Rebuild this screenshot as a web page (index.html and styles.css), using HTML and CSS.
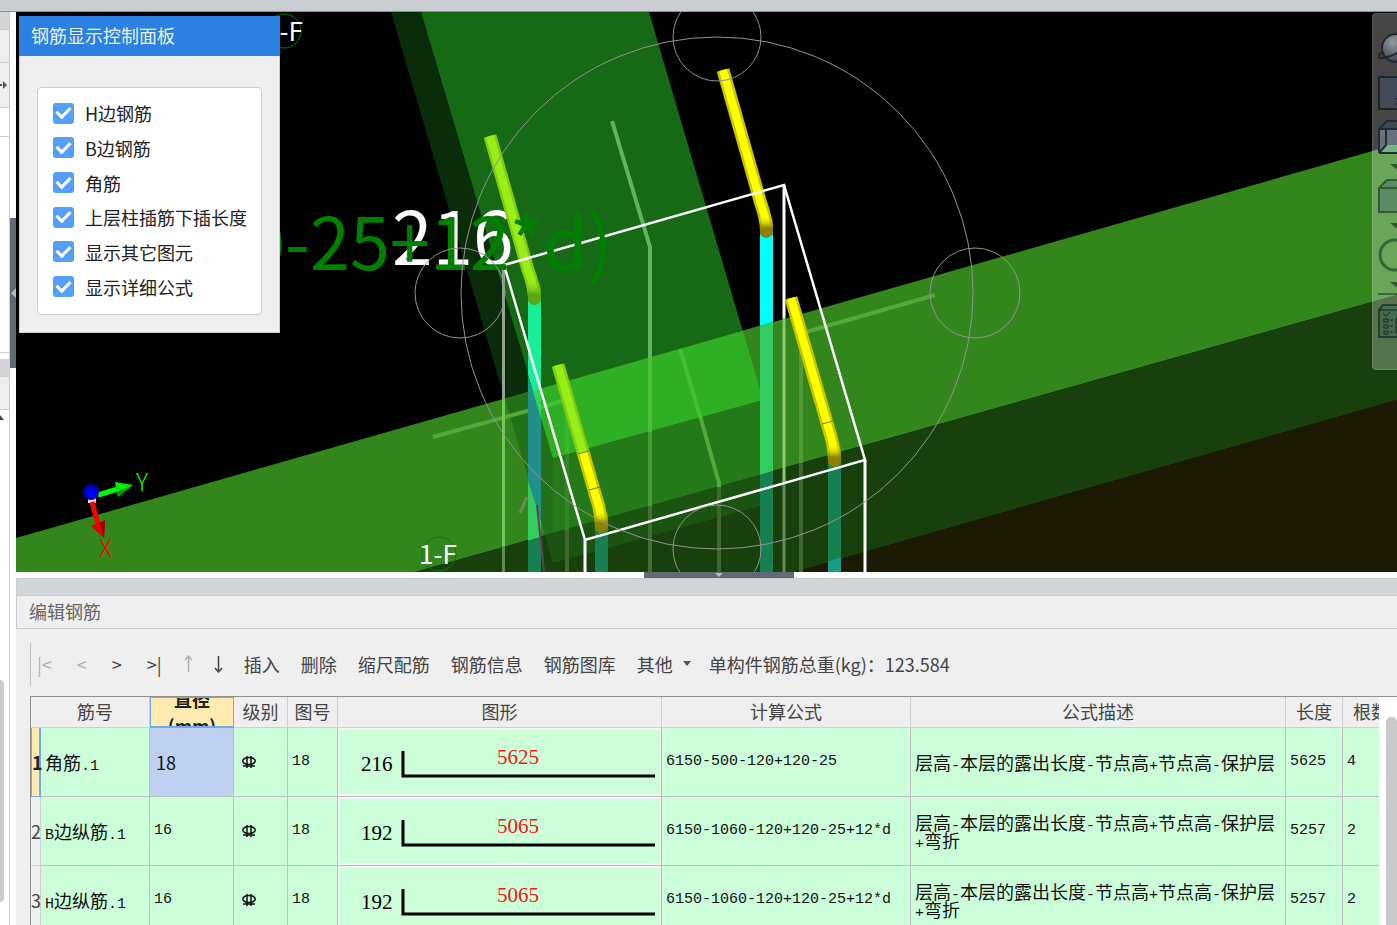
FILE: index.html
```html
<!DOCTYPE html>
<html lang="zh-CN">
<head>
    <meta charset="UTF-8">
    <meta name="viewport" content="width=device-width, initial-scale=1.0">
    <title>编辑钢筋</title>
    <link rel="stylesheet" href="styles.css">
</head>
<body>
    <div class="topbar"></div>

    <div class="workspace">
        <!-- edge of the docked side panels -->
        <aside class="dock">
            <div class="dock-title"></div>
            <div class="dock-row"></div>
            <div class="dock-tabs"><svg width="8" height="10" viewBox="0 0 8 10"><path d="M0 5h2" stroke="#555" stroke-width="2"/><path d="M3 1l4 4-4 4z" fill="#555"/></svg></div>
            <div class="dock-head"></div>
            <div class="dock-list"></div>
            <div class="dock-gap"></div>
            <div class="dock-title"></div>
            <div class="dock-row"></div>
            <div class="dock-tree">
                <svg width="5" height="12" viewBox="0 0 5 12"><path d="M0 5l4 5H0z" fill="#444"/></svg>
                <div class="dock-thumb"></div>
            </div>
        </aside>
        <div class="gutter">
            <div class="gutter-handle"><svg width="6" height="12" viewBox="0 0 6 12"><path d="M6 1v10L1 6z" fill="#b4bac0"/></svg></div>
        </div>

        <main class="main">
            <section class="viewport">
                <svg class="scene" viewBox="16 12 1381 560" preserveAspectRatio="xMinYMin slice">
                    <defs>
                        <linearGradient id="cap-yellow" x1="0" y1="0" x2="0" y2="1"><stop offset="0" stop-color="#e8e400" stop-opacity="0"/><stop offset="0.55" stop-color="#8a8200"/><stop offset="1" stop-color="#8a8200"/></linearGradient>
                        <linearGradient id="cap-green" x1="0" y1="0" x2="0" y2="1"><stop offset="0" stop-color="#86d416" stop-opacity="0"/><stop offset="0.55" stop-color="#58a815"/><stop offset="1" stop-color="#58a815"/></linearGradient>
                    </defs>
                    <rect x="16" y="12" width="2400" height="560" fill="#000"/>

                    <!-- beams -->
                    <polygon points="391,12 421,12 553,458 553,563" fill="#0a2c0a"/>
                    <polygon points="421,12 649,12 763,400 553,458" fill="#166a16"/>
                    <polygon points="16,538 1397,144 1397,295 415,572 16,572" fill="#33861c"/>
                    <polygon points="415,572 1397,295 1397,400 795,572" fill="#18400d"/>
                    <polygon points="795,572 1397,400 1397,572" fill="#1c1905"/>
                    <polygon points="505,399 533,391 553,458 553,533 545,535" fill="#237018"/>
                    <polygon points="533,391 743,331 763,400 553,458" fill="#2fb024"/>
                    <polygon points="553,458 763,400 763,474 553,533" fill="#247a18"/>
                    <polygon points="545,535 763,474 763,505 553,563" fill="#1a5410"/>

                    <!-- side face rebars -->
                    <g fill="none" stroke-width="4">
                        <path d="M612 121L650 247V358" stroke="#62b45a"/>
                        <path d="M650 358V432" stroke="#4fbd40"/>
                        <path d="M650 432V506" stroke="#459a35"/>
                        <path d="M650 506V572" stroke="#466b33"/>
                        <path d="M680 349L701 419" stroke="#44c034"/>
                        <path d="M701 419L719 483V487" stroke="#52a83c"/>
                        <path d="M719 487V572" stroke="#42662f"/>
                        <path d="M433 437L538 408" stroke="#55a83a"/>
                        <path d="M538 408L562 401" stroke="#44c034"/>
                        <path d="M806 332L935 295" stroke="#55a83a"/>
                        <path d="M567 400V454" stroke="#3cb830"/>
                        <path d="M567 454V530" stroke="#37852a"/>
                        <path d="M567 530V572" stroke="#3c6a2c"/>
                        <path d="M801 350V463" stroke="#4f9c38"/>
                        <path d="M801 463V572" stroke="#42662f"/>
                        <path d="M503.500 268V400" stroke="#8ea48e" stroke-width="3"/>
                        <path d="M503.500 400V546" stroke="#70c858" stroke-width="3"/>
                        <path d="M503.500 546V572" stroke="#5f8a50" stroke-width="3"/>
                        <path d="M527 497L520 513" stroke="#6d8a52" stroke-width="3"/>
                        <path d="M536 500L540 537" stroke="#6d8a52" stroke-width="2"/>
                    </g>

                    <!-- corner rebars, straight part -->
                    <path d="M528 298H541V418L528 375z" fill="#17ee98"/>
                    <path d="M528 375L533 391L528 393z" fill="#129c80"/>
                    <path d="M528 393L533 391L541 418V522L528 480z" fill="#22908a"/>
                    <path d="M533 391L541 389V418z" fill="#2fd856"/>
                    <path d="M528 480L541 522V537L528 541z" fill="#33cc60"/>
                    <path d="M528 541L541 537V572H528z" fill="#178050"/>
                    <path d="M537 505L544 572" stroke="#65405a" stroke-width="2"/>
                    <rect x="595" y="526" width="13" height="46" fill="#178050"/>
                    <path d="M760 230H773V322L760 326z" fill="#00ffff"/>
                    <path d="M760 326L773 322V471L760 475z" fill="#33cc60"/>
                    <path d="M760 475L773 471V572H760z" fill="#178050"/>
                    <path d="M828 460H841V557L828 561z" fill="#178050"/>
                    <path d="M828 561L841 557V572H828z" fill="#1c9a88"/>

                    <!-- dimension text behind the box -->
                    <text class="dim" x="392" y="265" fill="#fff">216</text>

                    <!-- corner rebars, bent part -->
                    <g fill="none" stroke-width="13">
                        <path d="M490 136L528 270Q534 286 534.500 298" stroke="#82cc16"/>
                        <path d="M490 136L528 270Q534 286 534.500 298" stroke="#98ee17" stroke-width="8"/>
                        <path d="M558 365L583 452" stroke="#82cc16"/>
                        <path d="M558 365L583 452" stroke="#98ee17" stroke-width="8"/>
                        <path d="M583 452L596 497Q601 512 601.500 526" stroke="#c8c400"/>
                        <path d="M583 452L596 497Q601 512 601.500 526" stroke="#ffff00" stroke-width="8"/>
                        <path d="M723 70L761 204Q766 218 766.500 230" stroke="#c8c400"/>
                        <path d="M723 70L761 204Q766 218 766.500 230" stroke="#ffff00" stroke-width="8"/>
                    </g>
                    <path d="M528 282H541V301Q534 309 528 301z" fill="url(#cap-green)"/>
                    <path d="M595 511H608V529Q601 537 595 529z" fill="url(#cap-yellow)"/>
                    <path d="M760 216H773V234Q766 242 760 234z" fill="url(#cap-yellow)"/>

                    <!-- column outline -->
                    <path d="M784 185V318" stroke="#fff" stroke-width="3"/>
                    <path d="M784 318V482" stroke="#8ac870" stroke-width="3"/>
                    <path d="M784 482V572" stroke="#668a58" stroke-width="3"/>
                    <path d="M504 265L784 185L865 460L585 540L504 265" fill="none" stroke="#fff" stroke-width="2.500"/>
                    <path d="M585 540V572M865 460V572" fill="none" stroke="#fff" stroke-width="3"/>
                    <g fill="none" stroke-width="13">
                        <path d="M791 298L829 430Q834 445 834.500 460" stroke="#c8c400"/>
                        <path d="M791 298L829 430Q834 445 834.500 460" stroke="#ffff00" stroke-width="8"/>
                    </g>
                    <path d="M828 445H841V463Q834 471 828 463z" fill="url(#cap-yellow)"/>
                    <path d="M578 454L589 451M589 490L600 487M822 424L833 421" stroke="#7a7a00" stroke-width="1"/>

                    <text class="dim-note" x="245" y="270" fill="#008000">0-25+12*d)</text>

                    <!-- orbit gizmo -->
                    <g fill="none" stroke="#929292" stroke-width="1">
                        <circle cx="717" cy="293" r="256"/>
                        <circle cx="460" cy="293" r="45"/>
                        <circle cx="975" cy="293" r="45"/>
                        <circle cx="717" cy="37" r="44"/>
                        <circle cx="717" cy="549" r="44"/>
                    </g>

                    <!-- axis labels -->
                    <g fill="none" stroke="#008000">
                        <circle cx="284" cy="31" r="17"/>
                        <circle cx="439" cy="554" r="17"/>
                    </g>
                    <text class="axis-label" x="265" y="41" fill="#fff">1-F</text>
                    <text class="axis-label" x="419" y="564" fill="#fff">1-F</text>

                    <!-- coordinate axes -->
                    <path d="M88 498h8v5h-8z" fill="#ddd"/>
                    <path d="M98 495L118 489" stroke="#00ff00" stroke-width="5"/>
                    <path d="M115 482L133 485L118 497z" fill="#00ee00"/>
                    <path d="M117 492L133 485L118 497z" fill="#009a00"/>
                    <path d="M92 502L98 524" stroke="#ff0000" stroke-width="5"/>
                    <path d="M91 526L105 520L104 538z" fill="#e00000"/>
                    <path d="M100 523L105 520L104 538z" fill="#960000"/>
                    <circle cx="91" cy="492" r="8" fill="#0000a8"/>
                    <circle cx="91" cy="493" r="5" fill="#0000f0"/>
                    <text class="axis-name" x="136" y="491" fill="#00ff00">Y</text>
                    <text class="axis-name" x="99" y="557" fill="#ff0000">X</text>
                </svg>

                <div class="panel">
                    <h2 class="panel-title">钢筋显示控制面板</h2>
                    <div class="panel-body">
                        <div class="options">
                            <label class="option"><input type="checkbox" checked><span>H边钢筋</span></label>
                            <label class="option"><input type="checkbox" checked><span>B边钢筋</span></label>
                            <label class="option"><input type="checkbox" checked><span>角筋</span></label>
                            <label class="option"><input type="checkbox" checked><span>上层柱插筋下插长度</span></label>
                            <label class="option"><input type="checkbox" checked><span>显示其它图元</span></label>
                            <label class="option"><input type="checkbox" checked><span>显示详细公式</span></label>
                        </div>
                    </div>
                </div>

                <nav class="view-tools">
                    <button type="button" aria-label="动态观察">
                        <svg width="34" height="34" viewBox="0 0 34 34"><defs><radialGradient id="ball" cx="0.4" cy="0.3" r="0.7"><stop offset="0" stop-color="#949aa2"/><stop offset="1" stop-color="#3c434c"/></radialGradient></defs><circle cx="18" cy="16" r="14" fill="url(#ball)" stroke="#20262e" stroke-width="2"/><path d="M5 20C0 22-1 27 5 26C14 25 24 19 32 11" fill="none" stroke="#20262e" stroke-width="2"/></svg>
                    </button>
                    <button type="button" aria-label="二维">
                        <svg width="34" height="34" viewBox="0 0 34 34"><path d="M1 1h32v32H1z" fill="#434b57" stroke="#20252c" stroke-width="2"/><path d="M18 23h5v5h-5" fill="none" stroke="#20252c" stroke-width="2"/></svg>
                    </button>
                    <button type="button" aria-label="俯视">
                        <svg width="34" height="34" viewBox="0 0 34 34"><path d="M1 9h32v24H1z" fill="#68727f"/><path d="M1 33l8-8h24v8z" fill="#71b584"/><path d="M1 9l8-8h24v8z" fill="#414852"/><path d="M1 33V9l8-8h24M1 9h32M1 33h32M8 9v16l-7 8" fill="none" stroke="#252b33" stroke-width="2"/></svg>
                    </button>
                    <span class="caret"></span>
                    <button type="button" aria-label="实体">
                        <svg width="34" height="34" viewBox="0 0 34 34"><path d="M1 9l8-8h24v32H1z" fill="#5b8d62" stroke="#315c35" stroke-width="2"/><path d="M1 9h32" stroke="#315c35" stroke-width="2"/></svg>
                    </button>
                    <span class="caret"></span>
                    <button type="button" aria-label="旋转">
                        <svg width="34" height="34" viewBox="0 0 34 34"><circle cx="17" cy="17" r="15" fill="none" stroke="#34663a" stroke-width="3"/></svg>
                    </button>
                    <span class="caret"></span>
                    <span class="rule"></span>
                    <button type="button" aria-label="显示设置">
                        <svg width="34" height="34" viewBox="0 0 34 34"><path d="M1 6l4-5h28v32H1z" fill="#476b4f" stroke="#213f2c" stroke-width="2"/><path d="M1 6h32M5 9l3 3 4-4M6 15h4v3H6zM6 21h4v3H6zM6 27h4v3H6zM12 16h3M12 22h3M12 28h3M18 14v16" fill="none" stroke="#213f2c" stroke-width="1.500"/></svg>
                    </button>
                </nav>
            </section>

            <div class="splitter">
                <div class="splitter-handle"><svg width="10" height="6" viewBox="0 0 10 6"><path d="M1 1h8L5 5z" fill="#b4bac0"/></svg></div>
            </div>

            <section class="editor">
                <div class="editor-strip"></div>
                <h2 class="editor-title">编辑钢筋</h2>

                <div class="toolbar">
                    <div class="nav-buttons">
                        <button type="button" disabled>|&lt;</button>
                        <button type="button" disabled>&lt;</button>
                        <button type="button">&gt;</button>
                        <button type="button">&gt;|</button>
                    </div>
                    <button type="button" disabled aria-label="上移"><svg width="9" height="18" viewBox="0 0 9 18"><path d="M4.500 17V2M1 5l3.500-4L8 5" fill="none" stroke="#b0b0b0" stroke-width="1.500"/></svg></button>
                    <button type="button" aria-label="下移"><svg width="9" height="18" viewBox="0 0 9 18"><path d="M4.500 1v15M1 13l3.500 4L8 13" fill="none" stroke="#444" stroke-width="1.500"/></svg></button>
                    <button type="button">插入</button>
                    <button type="button">删除</button>
                    <button type="button">缩尺配筋</button>
                    <button type="button">钢筋信息</button>
                    <button type="button">钢筋图库</button>
                    <button type="button" class="menu-button">其他<svg width="8" height="5" viewBox="0 0 8 5"><path d="M0 0h8L4 5z" fill="#555"/></svg></button>
                    <span class="total">单构件钢筋总重(kg)：123.584</span>
                </div>

                <div class="grid">
                    <div class="grid-clip">
                        <table>
                            <colgroup>
                                <col class="c-index">
                                <col class="c-name">
                                <col class="c-dia">
                                <col class="c-grade">
                                <col class="c-fig">
                                <col class="c-shape">
                                <col class="c-formula">
                                <col>
                                <col class="c-len">
                                <col class="c-len">
                            </colgroup>
                            <thead>
                                <tr>
                                    <th class="corner"></th>
                                    <th>筋号</th>
                                    <th class="active"><div>直径<br>(mm)</div></th>
                                    <th>级别</th>
                                    <th>图号</th>
                                    <th>图形</th>
                                    <th>计算公式</th>
                                    <th>公式描述</th>
                                    <th>长度</th>
                                    <th>根数</th>
                                </tr>
                            </thead>
                            <tbody>
                                <tr>
                                    <th class="current">1</th>
                                    <td>角筋<span class="num">.1</span></td>
                                    <td class="selected">18</td>
                                    <td class="grade"><svg width="14" height="16" viewBox="0 0 14 16"><path d="M5 2v12M9 2v12M1 12h12" fill="none" stroke="#111" stroke-width="1.500"/><ellipse cx="7" cy="7" rx="6.200" ry="3.500" fill="none" stroke="#111" stroke-width="1.500"/></svg></td>
                                    <td class="num">18</td>
                                    <td class="shape"><svg width="318" height="64" viewBox="0 0 318 64"><path d="M62 21v25h252" fill="none" stroke="#000" stroke-width="3"/><text x="20" y="41">216</text><text x="156" y="34" fill="#f01818">5625</text></svg></td>
                                    <td class="num">6150-500-120+120-25</td>
                                    <td>层高<span class="num">-</span>本层的露出长度<span class="num">-</span>节点高<span class="num">+</span>节点高<span class="num">-</span>保护层</td>
                                    <td class="num">5625</td>
                                    <td class="num">4</td>
                                </tr>
                                <tr>
                                    <th>2</th>
                                    <td><span class="num">B</span>边纵筋<span class="num">.1</span></td>
                                    <td class="num">16</td>
                                    <td class="grade"><svg width="14" height="16" viewBox="0 0 14 16"><path d="M5 2v12M9 2v12M1 12h12" fill="none" stroke="#111" stroke-width="1.500"/><ellipse cx="7" cy="7" rx="6.200" ry="3.500" fill="none" stroke="#111" stroke-width="1.500"/></svg></td>
                                    <td class="num">18</td>
                                    <td class="shape"><svg width="318" height="64" viewBox="0 0 318 64"><path d="M62 21v25h252" fill="none" stroke="#000" stroke-width="3"/><text x="20" y="41">192</text><text x="156" y="34" fill="#f01818">5065</text></svg></td>
                                    <td class="num">6150-1060-120+120-25+12*d</td>
                                    <td>层高<span class="num">-</span>本层的露出长度<span class="num">-</span>节点高<span class="num">+</span>节点高<span class="num">-</span>保护层<span class="num">+</span>弯折</td>
                                    <td class="num">5257</td>
                                    <td class="num">2</td>
                                </tr>
                                <tr>
                                    <th>3</th>
                                    <td><span class="num">H</span>边纵筋<span class="num">.1</span></td>
                                    <td class="num">16</td>
                                    <td class="grade"><svg width="14" height="16" viewBox="0 0 14 16"><path d="M5 2v12M9 2v12M1 12h12" fill="none" stroke="#111" stroke-width="1.500"/><ellipse cx="7" cy="7" rx="6.200" ry="3.500" fill="none" stroke="#111" stroke-width="1.500"/></svg></td>
                                    <td class="num">18</td>
                                    <td class="shape"><svg width="318" height="64" viewBox="0 0 318 64"><path d="M62 21v25h252" fill="none" stroke="#000" stroke-width="3"/><text x="20" y="41">192</text><text x="156" y="34" fill="#f01818">5065</text></svg></td>
                                    <td class="num">6150-1060-120+120-25+12*d</td>
                                    <td>层高<span class="num">-</span>本层的露出长度<span class="num">-</span>节点高<span class="num">+</span>节点高<span class="num">-</span>保护层<span class="num">+</span>弯折</td>
                                    <td class="num">5257</td>
                                    <td class="num">2</td>
                                </tr>
                            </tbody>
                        </table>
                    </div>
                    <div class="scrollbar"><div class="scroll-thumb"></div></div>
                </div>
            </section>
        </main>
    </div>
</body>
</html>
```

FILE: styles.css
```css
* {
    box-sizing: border-box;
}
body {
    margin: 0;
    height: 100vh;
    overflow: hidden;
    display: flex;
    flex-direction: column;
    font-family: "Noto Sans CJK SC", sans-serif;
    font-size: 18px;
    line-height: 24px;
    color: #222;
    background: white;
}
svg {
    display: block;
    flex-shrink: 0;
}
h2 {
    margin: 0;
    font-size: 18px;
    font-weight: 400;
}
button {
    margin: 0;
    padding: 0;
    border: none;
    background: none;
    font: inherit;
    color: #444;
    white-space: nowrap;
}
button:disabled {
    color: #b0b0b0;
}
.topbar {
    flex: none;
    height: 12px;
    background: #cacdd1;
    border-bottom: 1px solid #8d9296;
}
.workspace {
    flex: 1;
    min-height: 0;
    display: flex;
}

/* left dock */
.dock {
    width: 10px;
    flex: none;
    display: flex;
    flex-direction: column;
    overflow: hidden;
    border-right: 1px solid #c9cdd2;
}
.dock-title {
    flex: none;
    height: 18px;
    background: #d4d5d9;
    border-bottom: 1px solid #c9cdd2;
}
.dock-row {
    flex: none;
    height: 33px;
    background: #eee;
    border-bottom: 1px solid #c9cdd2;
}
.dock-tabs {
    flex: none;
    height: 45px;
    padding-top: 17px;
    background: #eee;
    border-bottom: 1px solid #c9cdd2;
}
.dock-head {
    flex: none;
    height: 29px;
    border-bottom: 1px solid #c9cdd2;
}
.dock-list {
    flex: none;
    height: 216px;
    border-bottom: 1px solid #c9cdd2;
}
.dock-gap {
    flex: none;
    height: 6px;
}
.dock-tree {
    flex: 1;
}
.dock-thumb {
    width: 4px;
    height: 222px;
    margin-top: 258px;
    background: #cbcbcb;
    border-radius: 0 4px 4px 0;
}
.gutter {
    width: 6px;
    flex: none;
}
.gutter-handle {
    height: 150px;
    margin-top: 206px;
    display: flex;
    align-items: center;
    background: #5f6973;
}
.main {
    flex: 1;
    min-width: 0;
    display: flex;
    flex-direction: column;
}

/* 3D view */
.viewport {
    position: relative;
    flex: none;
    overflow: hidden;
}
.scene {
    width: 100%;
    height: 560px;
}
.scene text {
    font-family: "Noto Sans CJK SC", sans-serif;
}
.scene .dim {
    font-size: 73px;
}
.scene .dim-note {
    font-size: 72px;
}
.scene .axis-label {
    font-size: 26px;
}
.scene .axis-name {
    font-size: 24px;
    font-weight: 300;
}
.panel {
    position: absolute;
    left: 3px;
    top: 4px;
    width: 261px;
    background: #efefef;
}
.panel-title {
    padding: 7px 12px 9px;
    background: #2c80e2;
    color: #e8f1fc;
}
.panel-body {
    padding: 31px 17px 17px;
    border: 1px solid #c4d0da;
    border-top: none;
}
.options {
    height: 228px;
    padding: 8px 15px 10px;
    display: grid;
    grid-template-rows: repeat(6, 1fr);
    background: white;
    border: 1px solid #c8ccd0;
    border-radius: 4px;
}
.option {
    display: flex;
    align-items: center;
    gap: 11px;
    white-space: nowrap;
}
.option input {
    appearance: none;
    width: 21px;
    height: 21px;
    flex: none;
    margin: 0;
    display: flex;
    justify-content: center;
    align-items: center;
    background: #549ffa;
    border-radius: 3px;
}
.option input:checked::after {
    content: "";
    width: 6px;
    height: 11px;
    margin-bottom: 4px;
    border: solid white;
    border-width: 0 3px 3px 0;
    transform: rotate(45deg);
}
.view-tools {
    position: absolute;
    right: 0;
    top: 1px;
    width: 25px;
    height: 357px;
    padding: 18px 0 0 5px;
    display: flex;
    flex-direction: column;
    align-items: flex-start;
    gap: 10px;
    overflow: hidden;
    background: rgba(255, 255, 255, 0.27);
    border: 1px solid rgba(255, 255, 255, 0.12);
    border-right: none;
    border-radius: 4px 0 0 4px;
}
.view-tools button {
    flex: none;
}
.caret {
    flex: none;
    margin-left: 12px;
    border: solid transparent;
    border-width: 5px 6px 0;
    border-top-color: #2f5c2c;
}
.rule {
    flex: none;
    width: 34px;
    height: 2px;
    margin: -4px 0 -1px;
    background: #3f6a35;
}
.splitter {
    flex: none;
    height: 6px;
    padding-left: 25px;
    display: flex;
    justify-content: center;
    background: white;
}
.splitter-handle {
    width: 150px;
    display: flex;
    justify-content: center;
    background: #616b75;
}

/* rebar editor */
.editor {
    flex: 1;
    min-height: 0;
    display: flex;
    flex-direction: column;
    background: #efefef;
}
.editor-strip {
    flex: none;
    height: 18px;
    background: #d4d5da;
    border: 1px solid #c9cccf;
    border-right: none;
}
.editor-title {
    flex: none;
    padding: 3px 12px 5px;
    color: #666;
    border-left: 1px solid #c9cccf;
    border-bottom: 1px solid #c9cccf;
}
.toolbar {
    flex: none;
    height: 43px;
    margin: 14px 0 10px 14px;
    padding: 0 0 2px 6px;
    display: flex;
    align-items: center;
    gap: 21px;
    border-left: 1px solid #c4c6c8;
    white-space: nowrap;
    color: #444;
}
.nav-buttons {
    display: flex;
    gap: 25px;
    margin-right: 1px;
}
.menu-button {
    display: flex;
    align-items: center;
    gap: 10px;
}
.total {
    margin-left: -3px;
}
.grid {
    flex: 1;
    min-height: 0;
    margin-left: 14px;
    display: flex;
    border-top: 1px solid #8c9095;
    border-left: 1px solid #8c9095;
}
.grid-clip {
    flex: 1;
    min-width: 0;
    overflow: hidden;
}
table {
    width: calc(100% + 21px);
    table-layout: fixed;
    border-collapse: separate;
    border-spacing: 0;
}
.c-index {
    width: 10px;
}
.c-name {
    width: 109px;
}
.c-dia {
    width: 84px;
}
.c-grade {
    width: 54px;
}
.c-fig {
    width: 50px;
}
.c-shape {
    width: 324px;
}
.c-formula {
    width: 249px;
}
.c-len {
    width: 57px;
}
th {
    padding: 0;
    font-weight: 400;
    color: #444;
    background: #efefef;
    border-right: 1px solid #d0d0d0;
    border-bottom: 1px solid #d0d0d0;
}
thead th {
    height: 31px;
    padding-bottom: 2px;
}
th.corner {
    border-right: none;
}
th.active {
    padding: 0;
    font-weight: 700;
    color: #222;
    background: #ffebb0;
    border: 1px solid #6caaea;
    border-bottom-width: 2px;
}
th.active div {
    height: 28px;
    display: flex;
    flex-direction: column;
    justify-content: center;
    line-height: 26px;
    overflow: hidden;
}
th.current {
    font-weight: 700;
    color: #222;
    background: #ffebb0;
    border-left: 1px solid #6caaea;
    border-right: 2px solid #6caaea;
    border-bottom-color: #6caaea;
}
td {
    height: 69px;
    padding: 0 4px;
    line-height: 18px;
    color: #111;
    background: #ccffd9;
    border-right: 1px solid #c0c0c0;
    border-bottom: 1px solid #c0c0c0;
}
td.selected {
    background: #c0d0f0;
    padding-left: 6px;
}
.num {
    font-family: "Liberation Mono", monospace;
    font-size: 15px;
}
td span.num {
    line-height: 0;
}
td.grade {
    padding-left: 8px;
}
td.shape {
    padding: 0;
    border-right-color: #b8b8b8;
}
td.shape svg {
    width: 100%;
    height: 68px;
    border: 2px solid #f4f4f4;
    border-width: 2px 1px 2px 2px;
}
td.shape text {
    font-family: "Liberation Serif", serif;
    font-size: 21px;
}
.scrollbar {
    flex: none;
    width: 18px;
    padding: 20px 0 0 7px;
    background: white;
}
.scroll-thumb {
    height: 100%;
    background: #c9c9c9;
    border-radius: 5px 5px 0 0;
}
```
